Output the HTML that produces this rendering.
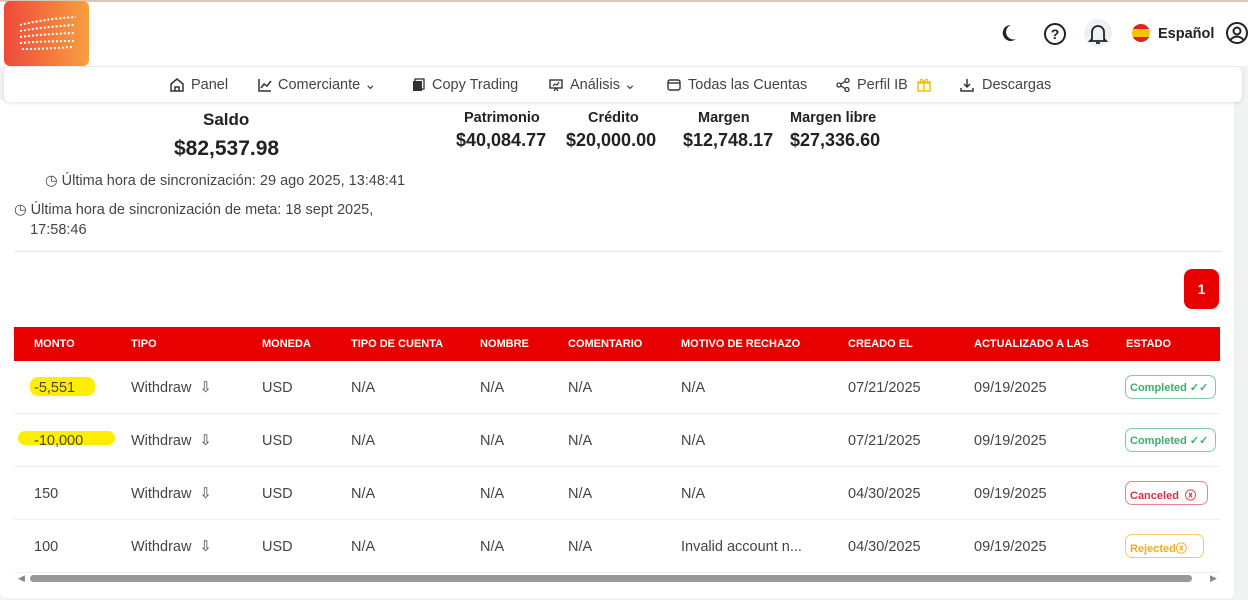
<!DOCTYPE html>
<html><head><meta charset="utf-8"><style>
*{box-sizing:border-box;margin:0;padding:0}
body{width:1248px;height:600px;background:#f1f2f4;font-family:"Liberation Sans",sans-serif;color:#333;position:relative;overflow:hidden}
.top{position:absolute;left:0;top:0;width:1248px;height:66px;background:#fff;border-top:2px solid #d8c8b8}
.logo{position:absolute;left:4px;top:1px;width:85px;height:65px;border-radius:6px;background:linear-gradient(90deg,#f0493a,#f7a040)}
.card{position:absolute;left:0;top:100px;width:1234px;height:498px;background:#fff;border-radius:0 0 6px 6px}
.nav{position:absolute;left:4px;top:67px;width:1238px;height:35px;background:#fff;border-radius:6px;box-shadow:0 1px 4px rgba(0,0,0,.12);font-size:14.5px;color:#444}
.nav span{position:absolute;top:10px;white-space:nowrap}
.nav svg{position:absolute;top:10px}
.abs{position:absolute;white-space:nowrap}
.b{font-weight:bold;color:#222}
.th{position:absolute;left:14px;top:327px;width:1206px;height:34px;background:#e80000;color:#fff;font-size:11px;font-weight:bold}
.th span{position:absolute;top:11px}
.row{position:absolute;left:14px;width:1206px;height:53px;border-bottom:1px solid #eee;font-size:14.5px;color:#444}
.row span{position:absolute;top:19px;white-space:nowrap}
.badge{position:absolute;top:14px!important;height:24px;border:1px solid;border-radius:7px;font-size:11px;font-weight:bold;padding:5px 4px 0 4px}
</style></head><body>
<div class="top"></div>
<div class="logo"><svg width="85" height="65"><g stroke="#fff" stroke-width="2" stroke-dasharray="2 2" fill="none"><path d="M16 24 Q40 18 72 16"/><path d="M16 30 Q40 26 70 24"/><path d="M16 36 Q40 33 70 32"/><path d="M16 42 Q40 40 70 40"/><path d="M18 48 Q40 48 68 46"/></g></svg></div>
<svg class="abs" style="left:998px;top:23px" width="20" height="20"><path d="M13 2a8 8 0 1 0 5 14A7 7 0 0 1 13 2z" fill="#222"/></svg>
<svg class="abs" style="left:1043px;top:22px" width="24" height="24"><circle cx="12" cy="12" r="10" fill="none" stroke="#222" stroke-width="2"/><text x="12" y="17" text-anchor="middle" font-size="14" font-weight="bold" fill="#222">?</text></svg>
<div class="abs" style="left:1084px;top:19px;width:28px;height:28px;border-radius:50%;background:#edf0f4"></div>
<svg class="abs" style="left:1087px;top:22px" width="22" height="24"><path d="M5 17V10a6 6 0 0 1 12 0v7l2 2H3z M9 21h4" fill="none" stroke="#222" stroke-width="1.8"/></svg>
<div class="abs" style="left:1132px;top:24px;width:18px;height:18px;border-radius:50%;background:linear-gradient(#d22 0 28%,#f5c400 28% 72%,#d22 72%)"></div>
<div class="abs b" style="left:1158px;top:26px;font-size:14.5px">Español</div>
<svg class="abs" style="left:1225px;top:21px" width="24" height="24"><circle cx="12" cy="12" r="10" fill="none" stroke="#222" stroke-width="2"/><circle cx="12" cy="10" r="3.5" fill="none" stroke="#222" stroke-width="2"/><path d="M5.5 19a8 8 0 0 1 13 0" fill="none" stroke="#222" stroke-width="2"/></svg>
<div class="card"></div>
<div class="nav">
<svg style="left:165px" width="16" height="16"><path d="M2 7 8 2l6 5v7H2z M6 14v-4h4v4" fill="none" stroke="#333" stroke-width="1.5"/></svg><span style="left:187px">Panel</span>
<svg style="left:253px" width="16" height="16"><path d="M2 2v12h12 M4 11l3-4 3 2 4-5" fill="none" stroke="#333" stroke-width="1.5"/></svg><span style="left:274px">Comerciante ⌄</span>
<svg style="left:406px" width="16" height="16"><rect x="3" y="4" width="9" height="10" fill="#333"/><rect x="5" y="2" width="9" height="10" fill="none" stroke="#333" stroke-width="1.3"/></svg><span style="left:428px">Copy Trading</span>
<svg style="left:544px" width="16" height="16"><rect x="2" y="3" width="12" height="8" fill="none" stroke="#333" stroke-width="1.4"/><path d="M5 9l2-2 2 1 2-3 M6 14l2-3 2 3" fill="none" stroke="#333" stroke-width="1.2"/></svg><span style="left:566px">Análisis ⌄</span>
<svg style="left:662px" width="16" height="16"><rect x="2" y="3" width="12" height="10" rx="2" fill="none" stroke="#333" stroke-width="1.4"/><path d="M2 6h12" stroke="#333" stroke-width="1.4"/></svg><span style="left:684px">Todas las Cuentas</span>
<svg style="left:831px" width="16" height="16"><circle cx="4" cy="8" r="2" fill="none" stroke="#333" stroke-width="1.3"/><circle cx="12" cy="3.5" r="2" fill="none" stroke="#333" stroke-width="1.3"/><circle cx="12" cy="12.5" r="2" fill="none" stroke="#333" stroke-width="1.3"/><path d="M6 7l4-2.5M6 9l4 2.5" stroke="#333" stroke-width="1.3"/></svg><span style="left:853px">Perfil IB</span>
<svg style="left:912px" width="16" height="16"><rect x="2" y="6" width="12" height="8" fill="none" stroke="#f0c000" stroke-width="1.4"/><path d="M1 5h14M8 5v9M8 5C6 1 3 2 5 5M8 5c2-4 5-3 3 0" fill="none" stroke="#f0c000" stroke-width="1.3"/></svg>
<svg style="left:955px" width="16" height="16"><path d="M8 2v8M5 7l3 3 3-3M2 11v3h12v-3" fill="none" stroke="#333" stroke-width="1.5"/></svg><span style="left:978px">Descargas</span>
</div>
<div class="abs b" style="left:203px;top:110px;font-size:17px">Saldo</div>
<div class="abs b" style="left:174px;top:137px;font-size:21px">$82,537.98</div>
<div class="abs b" style="left:464px;top:110px;font-size:14.5px">Patrimonio</div>
<div class="abs b" style="left:456px;top:130px;font-size:18px">$40,084.77</div>
<div class="abs b" style="left:588px;top:110px;font-size:14.5px">Crédito</div>
<div class="abs b" style="left:566px;top:130px;font-size:18px">$20,000.00</div>
<div class="abs b" style="left:698px;top:110px;font-size:14.5px">Margen</div>
<div class="abs b" style="left:683px;top:130px;font-size:18px">$12,748.17</div>
<div class="abs b" style="left:790px;top:110px;font-size:14.5px">Margen libre</div>
<div class="abs b" style="left:790px;top:130px;font-size:18px">$27,336.60</div>
<div class="abs" style="left:45px;top:173px;font-size:14.5px;color:#444">◷ Última hora de sincronización: 29 ago 2025, 13:48:41</div>
<div class="abs" style="left:14px;top:200px;font-size:14.5px;color:#444;line-height:20px">◷ Última hora de sincronización de meta: 18 sept 2025,<br>&nbsp;&nbsp;&nbsp;&nbsp;17:58:46</div>
<div class="abs" style="left:14px;top:251px;width:1208px;height:1px;background:#e4e4e4"></div>
<div class="abs" style="left:1184px;top:269px;width:35px;height:40px;background:#e80000;border-radius:8px;color:#fff;font-weight:bold;font-size:14px;text-align:center;line-height:40px">1</div>
<div class="th"><span style="left:20px">MONTO</span><span style="left:117px">TIPO</span><span style="left:248px">MONEDA</span><span style="left:337px">TIPO DE CUENTA</span><span style="left:466px">NOMBRE</span><span style="left:554px">COMENTARIO</span><span style="left:667px">MOTIVO DE RECHAZO</span><span style="left:834px">CREADO EL</span><span style="left:960px">ACTUALIZADO A LAS</span><span style="left:1112px">ESTADO</span></div>
<div class="abs" style="left:30px;top:377px;width:65px;height:19px;background:#ffee00;border-radius:8px"></div>
<div class="abs" style="left:18px;top:431px;width:97px;height:14px;background:#ffee00;border-radius:7px"></div>
<div class="row" style="top:361px"><span style="left:20px">-5,551</span><span style="left:117px">Withdraw &nbsp;⇩</span><span style="left:248px">USD</span><span style="left:337px">N/A</span><span style="left:466px">N/A</span><span style="left:554px">N/A</span><span style="left:667px">N/A</span><span style="left:834px">07/21/2025</span><span style="left:960px">09/19/2025</span><span class="badge" style="left:1111px;width:91px;color:#3bb06a;border-color:#7ccf9c">Completed ✓✓</span></div>
<div class="row" style="top:414px"><span style="left:20px">-10,000</span><span style="left:117px">Withdraw &nbsp;⇩</span><span style="left:248px">USD</span><span style="left:337px">N/A</span><span style="left:466px">N/A</span><span style="left:554px">N/A</span><span style="left:667px">N/A</span><span style="left:834px">07/21/2025</span><span style="left:960px">09/19/2025</span><span class="badge" style="left:1111px;width:91px;color:#3bb06a;border-color:#7ccf9c">Completed ✓✓</span></div>
<div class="row" style="top:467px"><span style="left:20px">150</span><span style="left:117px">Withdraw &nbsp;⇩</span><span style="left:248px">USD</span><span style="left:337px">N/A</span><span style="left:466px">N/A</span><span style="left:554px">N/A</span><span style="left:667px">N/A</span><span style="left:834px">04/30/2025</span><span style="left:960px">09/19/2025</span><span class="badge" style="left:1111px;width:83px;color:#d83040;border-color:#e88090">Canceled &nbsp;ⓧ</span></div>
<div class="row" style="top:520px"><span style="left:20px">100</span><span style="left:117px">Withdraw &nbsp;⇩</span><span style="left:248px">USD</span><span style="left:337px">N/A</span><span style="left:466px">N/A</span><span style="left:554px">N/A</span><span style="left:667px">Invalid account n...</span><span style="left:834px">04/30/2025</span><span style="left:960px">09/19/2025</span><span class="badge" style="left:1111px;width:79px;color:#f0a820;border-color:#f5c860">Rejectedⓧ</span></div>
<div class="abs" style="left:30px;top:575px;width:1162px;height:7px;background:#999;border-radius:4px"></div>
<div class="abs" style="left:18px;top:573px;font-size:9px;color:#888">◀</div>
<div class="abs" style="left:1210px;top:573px;font-size:9px;color:#888">▶</div>
</body></html>
